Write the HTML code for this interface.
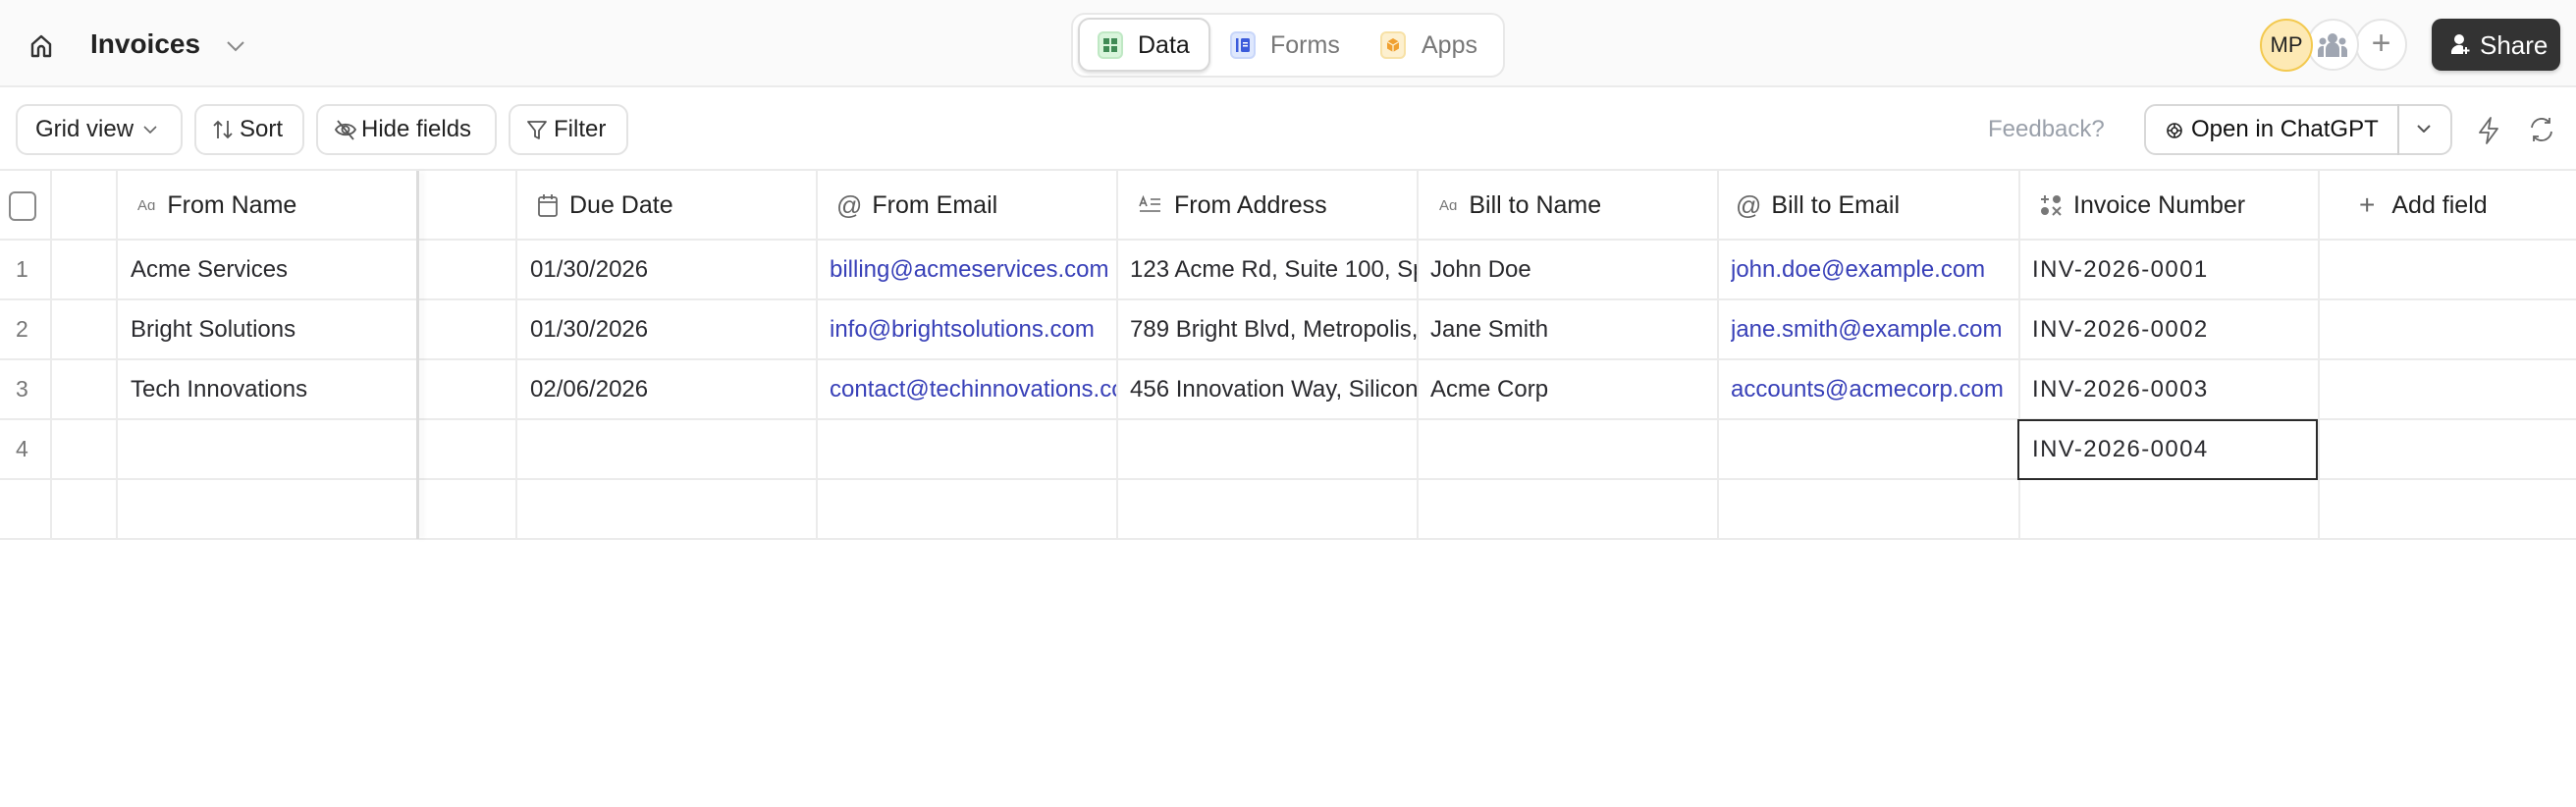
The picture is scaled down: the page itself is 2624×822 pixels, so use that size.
<!DOCTYPE html>
<html><head><meta charset="utf-8"><style>
*{box-sizing:border-box;margin:0;padding:0}
body{width:2624px;height:822px;background:#fff;font-family:"Liberation Sans",sans-serif;color:#2a2a2e;position:relative;overflow:hidden}
.a{position:absolute}
.top{left:0;top:0;width:2624px;height:89px;background:#fafafa;border-bottom:2px solid #ebebeb}
.btn{position:absolute;top:106px;height:52px;border:2px solid #e3e3e3;border-radius:12px;background:#fff;font-size:24px;display:flex;align-items:center;padding-left:18px;color:#222}
.vl{position:absolute;top:174px;width:2px;height:375px;background:#ebebeb}
.hl{position:absolute;left:0;width:2624px;height:2px;background:#ebebeb}
.h{position:absolute;top:174px;height:70px;display:flex;align-items:center;font-size:25px;color:#222}
.h svg{margin-right:12px}
.c{position:absolute;font-size:24px;height:61px;display:flex;align-items:center;white-space:nowrap;overflow:hidden}
.l{color:#3840b8}
.n{color:#777;font-size:23px}
.inv{letter-spacing:1.4px}
</style></head><body>
<div class="a top"></div>
<svg class="a" style="left:30px;top:34px" width="24" height="26" viewBox="0 0 24 26" fill="none" stroke="#333" stroke-width="2.4"><path d="M3 11 L12 3 L21 11 V23 H15 V16 A3 3 0 0 0 9 16 V23 H3 Z" stroke-linejoin="round"/></svg>
<div class="a" style="left:92px;top:29px;font-size:28px;font-weight:bold;color:#222">Invoices</div>
<svg class="a" style="left:230px;top:41px" width="20" height="12" viewBox="0 0 20 12" fill="none" stroke="#888" stroke-width="2"><path d="M2 2 L10 10 L18 2"/></svg>
<div class="a" style="left:1091px;top:13px;width:442px;height:66px;border:2px solid #e8e8e8;border-radius:14px;background:#fff"></div>
<div class="a" style="left:1098px;top:18px;width:135px;height:55px;border:2px solid #d8d8d8;border-radius:12px;background:#fff;box-shadow:0 2px 3px rgba(0,0,0,.12)"></div>
<div class="a" style="left:1118px;top:32px;width:26px;height:28px;border-radius:6px;background:#d9f5dc;border:2px solid #bfe8c4"></div>
<svg class="a" style="left:1124px;top:39px" width="14" height="14"><rect x="0" y="0" width="6" height="6" fill="#3f8a55"/><rect x="8" y="0" width="6" height="6" fill="#3f8a55"/><rect x="0" y="8" width="6" height="6" fill="#3f8a55"/><rect x="8" y="8" width="6" height="6" fill="#3f8a55"/></svg>
<div class="a" style="left:1159px;top:32px;font-size:25px;color:#1a1a1a">Data</div>
<div class="a" style="left:1253px;top:32px;width:26px;height:28px;border-radius:6px;background:#dfe8fd;border:2px solid #c8d6fa"></div>
<svg class="a" style="left:1259px;top:38px" width="14" height="16"><rect x="0" y="1" width="2.5" height="14" fill="#3b5bdb"/><rect x="5" y="1" width="9" height="14" rx="1.5" fill="#3b5bdb"/><rect x="7" y="5" width="5" height="1.5" fill="#fff"/><rect x="7" y="8" width="5" height="1.5" fill="#fff"/></svg>
<div class="a" style="left:1294px;top:32px;font-size:25px;color:#777">Forms</div>
<div class="a" style="left:1406px;top:32px;width:26px;height:28px;border-radius:6px;background:#fdf0cf;border:2px solid #f7e1a6"></div>
<svg class="a" style="left:1412px;top:38px" width="14" height="16" viewBox="0 0 14 16"><path d="M7 1 L13 4.5 V11.5 L7 15 L1 11.5 V4.5 Z" fill="#f0a030"/><path d="M1 4.5 L7 8 L13 4.5 M7 8 V15" stroke="#fdf0cf" stroke-width="1.3" fill="none"/></svg>
<div class="a" style="left:1448px;top:32px;font-size:25px;color:#777">Apps</div>
<div class="a" style="left:2399px;top:19px;width:53px;height:53px;border-radius:50%;background:#fff;border:2px solid #e5e5e5;color:#888;font-size:34px;text-align:center;line-height:46px">+</div>
<div class="a" style="left:2350px;top:19px;width:53px;height:53px;border-radius:50%;background:#fff;border:2px solid #e5e5e5"></div>
<svg class="a" style="left:2360px;top:33px" width="32" height="26" viewBox="0 0 32 26" fill="#a0a6b2"><circle cx="16" cy="6" r="5"/><circle cx="6" cy="9" r="3.5"/><circle cx="26" cy="9" r="3.5"/><path d="M9 25 V17 A7 7 0 0 1 23 17 V25Z"/><path d="M1 25 V18 A5 5 0 0 1 7 14 V25Z"/><path d="M31 25 V18 A5 5 0 0 0 25 14 V25Z"/></svg>
<div class="a" style="left:2302px;top:19px;width:54px;height:54px;border-radius:50%;background:#fde9b4;border:2px solid #f3c94f;font-size:22px;text-align:center;line-height:50px;color:#222">MP</div>
<div class="a" style="left:2477px;top:19px;width:131px;height:53px;border-radius:10px;background:#333;box-shadow:0 2px 4px rgba(0,0,0,.2)"></div>
<svg class="a" style="left:2497px;top:34px" width="20" height="22" viewBox="0 0 20 22" fill="#fff"><circle cx="8" cy="6" r="5"/><path d="M0 21 A8 8 0 0 1 12 13 V21Z"/><path d="M14 14 h2 v2.5 h2.5 v2 h-2.5 v2.5 h-2 v-2.5 h-2.5 v-2 h2.5z"/></svg>
<div class="a" style="left:2526px;top:31px;font-size:26px;color:#fff">Share</div>

<div class="btn" style="left:16px;width:170px">Grid view <svg style="margin-left:10px" width="14" height="8" fill="none" stroke="#666" stroke-width="1.6"><path d="M1 1 L7 7 L13 1"/></svg></div>
<div class="btn" style="left:198px;width:112px;padding-left:16px"><svg width="22" height="22" fill="none" stroke="#555" stroke-width="1.8" style="margin-right:6px"><path d="M6 20 V3 M2 7 L6 3 L10 7 M16 2 V19 M12 15 L16 19 L20 15"/></svg>Sort</div>
<div class="btn" style="left:322px;width:184px;padding-left:16px"><svg width="24" height="24" fill="none" stroke="#555" stroke-width="1.8" style="margin-right:4px"><path d="M2 12 C6 5 18 5 22 12 C18 19 6 19 2 12Z"/><circle cx="12" cy="12" r="3.5"/><path d="M4 3 L20 22"/></svg>Hide fields</div>
<div class="btn" style="left:518px;width:122px;padding-left:16px"><svg width="22" height="22" fill="none" stroke="#555" stroke-width="1.8" style="margin-right:6px"><path d="M2 3 H20 L13 12 V20 L9 18 V12 Z" stroke-linejoin="round"/></svg>Filter</div>

<div class="a" style="left:2025px;top:118px;font-size:24px;color:#9aa0aa">Feedback?</div>
<div class="a" style="left:2184px;top:106px;width:314px;height:52px;border:2px solid #d8d8d8;border-radius:12px;background:#fff"></div>
<div class="a" style="left:2442px;top:106px;width:2px;height:52px;background:#d0d0d0"></div>
<svg class="a" style="left:2206px;top:124px" width="18" height="18" viewBox="0 0 18 18" fill="none" stroke="#222" stroke-width="1.6"><circle cx="9" cy="9" r="7"/><circle cx="9" cy="9" r="3"/><path d="M9 2 V6 M9 12 V16 M2 9 H6 M12 9 H16"/></svg>
<div class="a" style="left:2232px;top:118px;font-size:24px;color:#111">Open in ChatGPT</div>
<svg class="a" style="left:2462px;top:127px" width="14" height="8" fill="none" stroke="#555" stroke-width="2"><path d="M1 1 L7 7 L13 1"/></svg>
<svg class="a" style="left:2522px;top:118px" width="26" height="30" viewBox="0 0 26 30" fill="none" stroke="#666" stroke-width="1.8" stroke-linejoin="round"><path d="M15 2 L4 17 H13 L11 28 L22 13 H13 Z"/></svg>
<svg class="a" style="left:2575px;top:118px" width="28" height="28" viewBox="0 0 28 28" fill="none" stroke="#666" stroke-width="1.8"><path d="M4 12 A10 10 0 0 1 22 7 M24 16 A10 10 0 0 1 6 21"/><path d="M22 2 V7 H17 M6 26 V21 H11"/></svg>

<div class="hl" style="top:172px"></div>
<div class="hl" style="top:243px"></div>
<div class="hl" style="top:304px"></div>
<div class="hl" style="top:365px"></div>
<div class="hl" style="top:426px"></div>
<div class="hl" style="top:487px"></div>
<div class="hl" style="top:548px"></div>
<div class="vl" style="left:51px"></div>
<div class="vl" style="left:118px"></div>
<div class="vl" style="left:424px;width:3px;background:#dcdcdc;box-shadow:4px 0 6px rgba(0,0,0,.06)"></div>
<div class="vl" style="left:525px"></div>
<div class="vl" style="left:831px"></div>
<div class="vl" style="left:1137px"></div>
<div class="vl" style="left:1443px"></div>
<div class="vl" style="left:1749px"></div>
<div class="vl" style="left:2056px"></div>
<div class="vl" style="left:2361px"></div>

<div class="a" style="left:9px;top:195px;width:28px;height:30px;border:2px solid #888;border-radius:6px"></div>
<div class="h" style="left:140px"><span style="font-size:15px;color:#777;margin-right:12px">Aɑ</span>From Name</div>
<div class="h" style="left:548px"><svg width="20" height="24" fill="none" stroke="#666" stroke-width="1.8"><rect x="1" y="4" width="18" height="19" rx="2"/><path d="M1 9 H19 M6 1 V6 M14 1 V6"/></svg>Due Date</div>
<div class="h" style="left:852px"><span style="font-size:26px;color:#666;margin-right:10px">@</span>From Email</div>
<div class="h" style="left:1160px"><svg width="24" height="20" fill="none" stroke="#666" stroke-width="1.6"><path d="M1 11 L4.5 2 L8 11 M2.5 8 H6.5 M12 4 H22 M12 9 H22 M1 16 H22"/></svg>From Address</div>
<div class="h" style="left:1466px"><span style="font-size:15px;color:#777;margin-right:12px">Aɑ</span>Bill to Name</div>
<div class="h" style="left:1768px"><span style="font-size:26px;color:#666;margin-right:10px">@</span>Bill to Email</div>
<div class="h" style="left:2078px"><svg width="22" height="24" viewBox="0 0 22 24" fill="#777"><path d="M1 6 H9 M5 2 V10" stroke="#777" stroke-width="2"/><circle cx="17" cy="6" r="4"/><circle cx="5" cy="18" r="4"/><path d="M13 14 L21 22 M21 14 L13 22" stroke="#777" stroke-width="2"/></svg>Invoice Number</div>
<div class="h" style="left:2403px"><span style="font-size:28px;color:#666;margin-right:17px">+</span>Add field</div>

<div class="c n" style="left:16px;top:244px">1</div>
<div class="c n" style="left:16px;top:305px">2</div>
<div class="c n" style="left:16px;top:366px">3</div>
<div class="c n" style="left:16px;top:427px">4</div>

<div class="c" style="left:133px;top:244px">Acme Services</div>
<div class="c" style="left:133px;top:305px">Bright Solutions</div>
<div class="c" style="left:133px;top:366px">Tech Innovations</div>

<div class="c" style="left:540px;top:244px">01/30/2026</div>
<div class="c" style="left:540px;top:305px">01/30/2026</div>
<div class="c" style="left:540px;top:366px">02/06/2026</div>

<div class="c l" style="left:845px;top:244px;width:292px">billing@acmeservices.com</div>
<div class="c l" style="left:845px;top:305px;width:292px">info@brightsolutions.com</div>
<div class="c l" style="left:845px;top:366px;width:292px">contact@techinnovations.com</div>

<div class="c" style="left:1151px;top:244px;width:292px">123 Acme Rd, Suite 100, Springfield</div>
<div class="c" style="left:1151px;top:305px;width:292px">789 Bright Blvd, Metropolis, NY</div>
<div class="c" style="left:1151px;top:366px;width:292px">456 Innovation Way, Silicon Valley</div>

<div class="c" style="left:1457px;top:244px">John Doe</div>
<div class="c" style="left:1457px;top:305px">Jane Smith</div>
<div class="c" style="left:1457px;top:366px">Acme Corp</div>

<div class="c l" style="left:1763px;top:244px">john.doe@example.com</div>
<div class="c l" style="left:1763px;top:305px">jane.smith@example.com</div>
<div class="c l" style="left:1763px;top:366px">accounts@acmecorp.com</div>

<div class="c inv" style="left:2070px;top:244px">INV-2026-0001</div>
<div class="c inv" style="left:2070px;top:305px">INV-2026-0002</div>
<div class="c inv" style="left:2070px;top:366px">INV-2026-0003</div>
<div class="a" style="left:2055px;top:427px;width:306px;height:62px;border:2px solid #2a2a2a;background:#fff"></div>
<div class="c inv" style="left:2070px;top:427px">INV-2026-0004</div>
</body></html>
